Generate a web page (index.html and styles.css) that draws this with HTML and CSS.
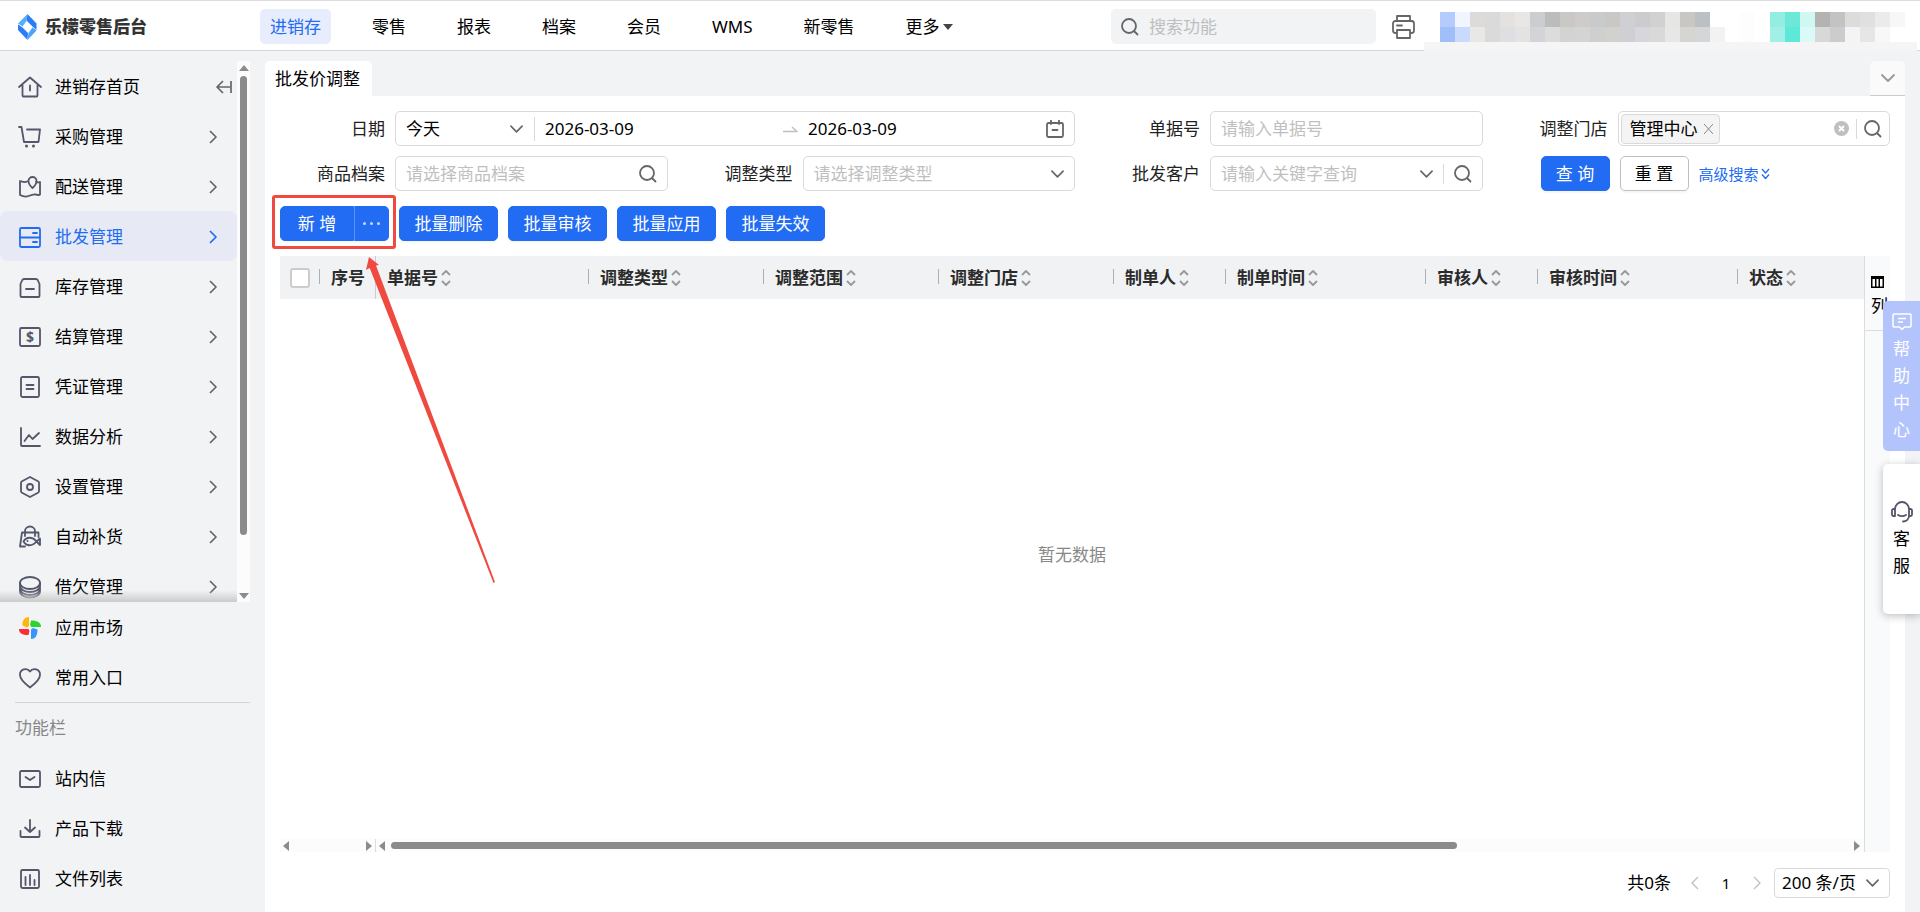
FILE: index.html
```
<!DOCTYPE html>
<html lang="zh-CN">
<head>
    <meta charset="UTF-8">
    <title>批发价调整 - 乐檬零售后台</title>
    <link rel="stylesheet" href="styles.css">
</head>
<body>
    <!-- shared icons -->
    <svg class="sprite" aria-hidden="true">
        <symbol id="i-right" viewBox="0 0 8 14"><path d="M1 1l6 6-6 6"/></symbol>
        <symbol id="i-left" viewBox="0 0 8 14"><path d="M7 1L1 7l6 6"/></symbol>
        <symbol id="i-down" viewBox="0 0 14 8"><path d="M1 1l6 6 6-6"/></symbol>
        <symbol id="i-search" viewBox="0 0 18 18"><circle cx="8" cy="8" r="7"/><path d="M13.500 13.500l3 3"/></symbol>
        <symbol id="i-sort" viewBox="0 0 10 18"><path d="M1 6l4-4 4 4M1 12l4 4 4-4"/></symbol>
    </svg>

    <header class="header">
        <div class="brand">
            <svg width="19" height="26" viewBox="0 0 19 26">
                <path d="M9.500 0L8.500 7 4.500 12.500 0 9.500z" fill="#57aefd"/>
                <path d="M9.500 0L18.500 9.500v6.500L14.500 12.500 8.500 6.500z" fill="#2b7cf7"/>
                <path d="M0 10.500l4.500 3L10 19l-.5 7L0 16z" fill="#2b7cf7"/>
                <path d="M18.500 16.500l-4-3L10.500 19l-1 7z" fill="#4ba3fc"/>
            </svg>
            <span>乐檬零售后台</span>
        </div>
        <nav class="nav">
            <a href="#" class="active">进销存</a>
            <a href="#">零售</a>
            <a href="#">报表</a>
            <a href="#">档案</a>
            <a href="#">会员</a>
            <a href="#">WMS</a>
            <a href="#">新零售</a>
            <a href="#">更多<i class="caret"></i></a>
        </nav>
        <div class="search">
            <svg class="icon" width="18" height="18"><use href="#i-search"/></svg>
            <input type="text" placeholder="搜索功能" aria-label="搜索功能">
        </div>
        <button class="print" aria-label="打印">
            <svg class="icon" width="23" height="24" viewBox="0 0 23 24">
                <path d="M5 6V1h13v5M5 18H3.500A2.500 2.500 0 0 1 1 15.500V8.500A2.500 2.500 0 0 1 3.500 6h16A2.500 2.500 0 0 1 22 8.500v7a2.500 2.500 0 0 1-2.500 2.500H18M5 15h13v8H5zM5 10.500h5"/>
            </svg>
        </button>
        <div class="user" id="user"></div>
    </header>

    <div class="layout">
        <aside class="sidebar">
            <div class="menu-wrap">
                <div class="menu">
                    <a href="#" class="item">
                        <svg class="icon" viewBox="0 0 22 22"><path d="M0 11L11 1.500 22 11M3.500 9v10.500a1 1 0 0 0 1 1h13a1 1 0 0 0 1-1V9M11 9.500v5"/></svg>
                        <span>进销存首页</span>
                        <svg class="collapse" viewBox="0 0 16 14"><path d="M7 1L1 7l6 6M1 7h13M15 1v12"/></svg>
                    </a>
                    <a href="#" class="item">
                        <svg class="icon" viewBox="0 0 22 22"><path d="M0 1h2.500L5 16h14.500l1.500-12.500H8"/><circle class="dot" cx="7.500" cy="20" r="1.500"/><circle class="dot" cx="14.500" cy="20" r="1.500"/></svg>
                        <span>采购管理</span>
                        <svg class="arrow"><use href="#i-right"/></svg>
                    </a>
                    <a href="#" class="item">
                        <svg class="icon" viewBox="0 0 22 22"><path d="M8 5.500c-3 1.500-5 0-7-.5v14c3 1.500 6 2 8.500 1s5-2 7.500-1.500 3 1 4 0V6c-1 .5-2.500.5-4-.5M13.500 1a4 4 0 0 1 4 4c0 3.500-4 7-4 7s-4-3.500-4-7a4 4 0 0 1 4-4z"/></svg>
                        <span>配送管理</span>
                        <svg class="arrow"><use href="#i-right"/></svg>
                    </a>
                    <a href="#" class="item active">
                        <svg class="icon" viewBox="0 0 22 22"><rect x="1" y="2" width="20" height="19" rx="1.500"/><path d="M1 11.500h20M14 7h4M14 16h4"/></svg>
                        <span>批发管理</span>
                        <svg class="arrow"><use href="#i-right"/></svg>
                    </a>
                    <a href="#" class="item">
                        <svg class="icon" viewBox="0 0 22 22"><path d="M5 3h12a2 2 0 0 1 1.700 1L20.500 8v12a1 1 0 0 1-1 1h-17a1 1 0 0 1-1-1V8L3.300 4A2 2 0 0 1 5 3zM7 13h8"/></svg>
                        <span>库存管理</span>
                        <svg class="arrow"><use href="#i-right"/></svg>
                    </a>
                    <a href="#" class="item">
                        <svg class="icon" viewBox="0 0 22 22"><rect x="1" y="2" width="20" height="18" rx="1.500"/><text class="sign" x="11" y="16">$</text></svg>
                        <span>结算管理</span>
                        <svg class="arrow"><use href="#i-right"/></svg>
                    </a>
                    <a href="#" class="item">
                        <svg class="icon" viewBox="0 0 22 22"><rect x="2" y="1" width="18" height="20" rx="1.500"/><path d="M7.500 9h7M7.500 13h7"/></svg>
                        <span>凭证管理</span>
                        <svg class="arrow"><use href="#i-right"/></svg>
                    </a>
                    <a href="#" class="item">
                        <svg class="icon" viewBox="0 0 22 22"><path d="M2 2v17a1 1 0 0 0 1 1h18M5.500 15l4.500-6 3.500 4L20 7"/></svg>
                        <span>数据分析</span>
                        <svg class="arrow"><use href="#i-right"/></svg>
                    </a>
                    <a href="#" class="item">
                        <svg class="icon" viewBox="0 0 22 22"><path d="M11 1l8 4.200q1 .5 1 1.500v8.600q0 1-1 1.500L11 21l-8-4.200q-1-.5-1-1.500V6.700q0-1 1-1.500z"/><circle cx="11" cy="11" r="3"/></svg>
                        <span>设置管理</span>
                        <svg class="arrow"><use href="#i-right"/></svg>
                    </a>
                    <a href="#" class="item">
                        <svg class="icon" viewBox="0 0 22 22"><path d="M6 10V5a5 4.500 0 0 1 10 0v5M19.500 11V6.500H3L1 20.500h5M4.500 15.500c3-5 9-5 13 0l3.500-3v6.500l-3.500-3.500c-4 5-10 5-13 0z"/><circle class="dot" cx="8.500" cy="15" r="1"/></svg>
                        <span>自动补货</span>
                        <svg class="arrow"><use href="#i-right"/></svg>
                    </a>
                    <a href="#" class="item">
                        <svg class="icon" viewBox="0 0 22 22"><ellipse cx="11" cy="7" rx="10" ry="6"/><path d="M1 7v8.500c0 3.300 4.500 6 10 6s10-2.700 10-6V7M1 10c0 3.300 4.500 6 10 6s10-2.700 10-6M1 13c0 3.300 4.500 6 10 6s10-2.700 10-6"/></svg>
                        <span>借欠管理</span>
                        <svg class="arrow"><use href="#i-right"/></svg>
                    </a>
                </div>
                <div class="scroll-y">
                    <i class="tri up"></i>
                    <i class="thumb"></i>
                    <i class="tri down"></i>
                </div>
            </div>
            <div class="menu-bottom">
                <a href="#" class="item">
                    <svg viewBox="0 0 22 22">
                        <path d="M10 9V0C6 0 3 3 3.500 8.500L8 10.500z" fill="#ffb60a"/>
                        <path d="M12.500 10H22c0-4-3-6.500-10-6.500L11 8z" fill="#2bd42f"/>
                        <path d="M12 12.500V22c4 0 6.500-3 6.500-9.500L14 11z" fill="#3596ff"/>
                        <path d="M9.500 12H0c0 4 3 6 9.500 6l1-4z" fill="#fb2c36"/>
                    </svg>
                    <span>应用市场</span>
                </a>
                <a href="#" class="item">
                    <svg class="icon" viewBox="0 0 22 22"><path d="M11 20.500C5 16 1 12.500 1 8a5.500 5.500 0 0 1 10-3.500A5.500 5.500 0 0 1 21 8c0 4.500-4 8-10 12.500z"/></svg>
                    <span>常用入口</span>
                </a>
                <div class="menu-title">功能栏</div>
                <a href="#" class="item">
                    <svg class="icon" viewBox="0 0 22 22"><rect x="1" y="3" width="20" height="16" rx="1.500"/><path d="M6.500 9l4.500 3 4.500-3"/></svg>
                    <span>站内信</span>
                </a>
                <a href="#" class="item">
                    <svg class="icon" viewBox="0 0 22 22"><path d="M11 2v12M6 9.500l5 4.500 5-4.500M1.500 13v5a1 1 0 0 0 1 1h17a1 1 0 0 0 1-1v-5"/></svg>
                    <span>产品下载</span>
                </a>
                <a href="#" class="item">
                    <svg class="icon" viewBox="0 0 22 22"><rect x="2" y="2" width="18" height="18" rx="1.500"/><path d="M6.500 9v8M11 7v10M15.500 12v5"/></svg>
                    <span>文件列表</span>
                </a>
            </div>
        </aside>

        <main class="content">
            <div class="tabs">
                <a href="#" class="tab">批发价调整</a>
                <button class="tab-more" aria-label="更多标签"><svg class="icon" width="14" height="8"><use href="#i-down"/></svg></button>
            </div>

            <div class="panel">
                <form class="filters">
                    <div class="field wide">
                        <label for="dateType">日期</label>
                        <div class="control">
                            <div class="date-type">
                                <select id="dateType"><option>今天</option></select>
                                <svg class="icon" width="13" height="8"><use href="#i-down"/></svg>
                            </div>
                            <input type="text" class="date" value="2026-03-09" aria-label="开始日期">
                            <svg class="to" width="15" height="8" viewBox="0 0 15 8"><path d="M0 6.500h14L9 2"/></svg>
                            <input type="text" class="date" value="2026-03-09" aria-label="结束日期">
                            <svg class="icon" width="18" height="18" viewBox="0 0 18 18"><rect x="1" y="3" width="16" height="14" rx="1.500"/><path d="M5 0v4M13 0v4M6.500 10h5"/></svg>
                        </div>
                    </div>
                    <div class="field">
                        <label for="billNo">单据号</label>
                        <div class="control"><input type="text" id="billNo" placeholder="请输入单据号"></div>
                    </div>
                    <div class="field">
                        <label for="store">调整门店</label>
                        <div class="control store">
                            <span class="tag">管理中心<svg width="9" height="10" viewBox="0 0 9 10"><path d="M0 0l9 10M9 0L0 10"/></svg></span>
                            <input type="text" id="store">
                            <svg width="15" height="15" viewBox="0 0 15 15"><circle cx="7.500" cy="7.500" r="7.500" fill="#bfbfbf"/><path d="M5 5l5 5M10 5l-5 5" stroke="#fff" stroke-width="2"/></svg>
                            <i class="split"></i>
                            <svg class="icon" width="18" height="18"><use href="#i-search"/></svg>
                        </div>
                    </div>
                    <div class="field">
                        <label for="goods">商品档案</label>
                        <div class="control">
                            <input type="text" id="goods" placeholder="请选择商品档案">
                            <svg class="icon" width="18" height="18"><use href="#i-search"/></svg>
                        </div>
                    </div>
                    <div class="field">
                        <label for="adjustType">调整类型</label>
                        <div class="control">
                            <select id="adjustType" class="empty-select"><option>请选择调整类型</option></select>
                            <svg class="icon" width="13" height="8"><use href="#i-down"/></svg>
                        </div>
                    </div>
                    <div class="field">
                        <label for="customer">批发客户</label>
                        <div class="control">
                            <input type="text" id="customer" placeholder="请输入关键字查询">
                            <svg class="icon" width="13" height="8"><use href="#i-down"/></svg>
                            <i class="split"></i>
                            <svg class="icon" width="18" height="18"><use href="#i-search"/></svg>
                        </div>
                    </div>
                    <div class="actions">
                        <button type="button" class="btn primary">查 询</button>
                        <button type="button" class="btn">重 置</button>
                        <a href="#">高级搜索<svg width="9" height="12" viewBox="0 0 9 12"><path d="M1 1l3.500 4L8 1M1 6.500l3.500 4 3.500-4"/></svg></a>
                    </div>
                </form>

                <div class="toolbar">
                    <div class="btn-group">
                        <button class="btn primary">新 增</button>
                        <button class="btn primary more" aria-label="更多"><i></i><i></i><i></i></button>
                    </div>
                    <button class="btn primary">批量删除</button>
                    <button class="btn primary">批量审核</button>
                    <button class="btn primary">批量应用</button>
                    <button class="btn primary">批量失效</button>
                    <div class="mark"></div>
                    <svg class="mark-arrow" width="134" height="330" viewBox="0 0 134 330"><path d="M5 1L2 14l3.700-2L129.500 327l1.500-1L12 9.500 15 9z"/></svg>
                </div>

                <div class="grid">
                    <div class="grid-main">
                        <table>
                            <colgroup>
                                <col class="w-check"><col class="w-index"><col class="w-bill"><col class="w-mid"><col class="w-mid"><col class="w-mid"><col class="w-name"><col class="w-time"><col class="w-name"><col class="w-time"><col>
                            </colgroup>
                            <thead>
                                <tr>
                                    <th class="check"><input type="checkbox" aria-label="全选"></th>
                                    <th class="pinned">序号</th>
                                    <th>单据号<svg class="sort"><use href="#i-sort"/></svg></th>
                                    <th>调整类型<svg class="sort"><use href="#i-sort"/></svg></th>
                                    <th>调整范围<svg class="sort"><use href="#i-sort"/></svg></th>
                                    <th>调整门店<svg class="sort"><use href="#i-sort"/></svg></th>
                                    <th>制单人<svg class="sort"><use href="#i-sort"/></svg></th>
                                    <th>制单时间<svg class="sort"><use href="#i-sort"/></svg></th>
                                    <th>审核人<svg class="sort"><use href="#i-sort"/></svg></th>
                                    <th>审核时间<svg class="sort"><use href="#i-sort"/></svg></th>
                                    <th>状态<svg class="sort"><use href="#i-sort"/></svg></th>
                                </tr>
                            </thead>
                        </table>
                        <div class="empty">暂无数据</div>
                        <div class="scroll-x">
                            <div class="track fixed"><i class="tri left"></i><i class="tri right"></i></div>
                            <div class="track"><i class="tri left"></i><i class="thumb"></i><i class="tri right"></i></div>
                        </div>
                    </div>
                    <div class="grid-side">
                        <button>
                            <svg width="13" height="12" viewBox="0 0 13 12"><path d="M0 0h13v12H0z"/><path d="M1.500 3H4v7.500H1.500zM5.500 3h2v7.500h-2zM9 3h2.500v7.500H9z" fill="#fff"/></svg>
                            列
                        </button>
                    </div>
                </div>

                <div class="pager">
                    <span class="total">共0条</span>
                    <button aria-label="上一页"><svg width="8" height="14"><use href="#i-left"/></svg></button>
                    <span class="page">1</span>
                    <button aria-label="下一页"><svg width="8" height="14"><use href="#i-right"/></svg></button>
                    <div class="size">
                        <select aria-label="每页条数"><option>200 条/页</option></select>
                        <svg class="icon" width="13" height="8"><use href="#i-down"/></svg>
                    </div>
                </div>
            </div>
        </main>
    </div>

    <div class="float">
        <a href="#" class="help">
            <svg width="20" height="18" viewBox="0 0 20 18"><path d="M2 1h16a1 1 0 0 1 1 1v11a1 1 0 0 1-1 1h-5.500L10 16.500 7.500 14H2a1 1 0 0 1-1-1V2a1 1 0 0 1 1-1zM6 5.500h8M6 9h5"/></svg>
            <span>帮助中心</span>
        </a>
        <a href="#" class="service">
            <svg class="icon" width="22" height="22" viewBox="0 0 22 22"><path d="M4 8a7 7 0 0 1 14 0M4 8v7H2.500A1.500 1.500 0 0 1 1 13.500v-4A1.500 1.500 0 0 1 2.500 8zM18 8v7h1.500a1.500 1.500 0 0 0 1.500-1.500v-4A1.500 1.500 0 0 0 19.500 8zM18 15c0 3-2.500 5.500-6 5.500M7 14c2.500 1.500 5.500 1.500 8 0"/></svg>
            <span>客服</span>
        </a>
    </div>

    <script>
        // blurred account info in the header, one colour per block
        const rows = [
            "b3ccfd f0f5ff dcdbd9 d8dadc e3e2df e9e6e5 cbcdd1 bcbcbc cac8c5 cdcccb c9cacb c9c8c6 cfd0d4 ccccce d1d1d1 e6e6e5 c9c7c4 bbc0c4 ffffff ffffff fdfdfd ffffff 94ede1 6de7d8 d0f8f3 b5b3b2 c3c3c3 dcdcdb e0e0e1 ebebeb f7f7f7",
            "a0bef8 c9dafc e9e8e6 dadada dddfe2 e3e3e3 d3d4d7 dcdcdd d1d4d2 d4d5d2 cfcfd0 d2d1cd cfcfd4 d5d7dc d9d9d9 e7e7e7 d5d5d2 d5d6d7 f2f2f2 ffffff fdfdfd ffffff a1f0e8 5ee8da dafaf7 d8d8d8 cccccc f2f4f6 e6e6e6 f8f8f8 ffffff"
        ];
        const user = document.getElementById("user");
        rows.join(" ").split(" ").forEach(color => {
            const block = document.createElement("i");
            block.style.background = "#" + color;
            user.appendChild(block);
        });
    </script>
</body>
</html>
```
FILE: styles.css
```
* {
    box-sizing: border-box;
}

body {
    margin: 0;
    height: 100vh;
    display: flex;
    flex-direction: column;
    overflow: hidden;
    background: #f1f3f5;
    color: #000;
    font: 17px/24px "Noto Sans", "Noto Sans CJK SC", sans-serif;
}

a {
    color: inherit;
    text-decoration: none;
}

input, select, button {
    font: inherit;
    color: inherit;
    margin: 0;
    padding: 0;
    border: none;
    background: none;
    outline: none;
}

button {
    cursor: pointer;
}

select {
    appearance: none;
    flex: 1;
    min-width: 0;
}

input::placeholder, .empty-select {
    color: #bfbfbf;
    opacity: 1;
}

svg {
    flex: none;
    fill: none;
    stroke-linejoin: round;
}

.sprite {
    position: absolute;
    width: 0;
    height: 0;
}

.icon {
    stroke: #666;
    stroke-width: 1.8;
    stroke-linecap: round;
}

/* header */
.header {
    flex: none;
    height: 51px;
    padding-top: 2px;
    display: flex;
    align-items: center;
    background: #fff;
    border-top: 1px solid #ddd;
    border-bottom: 1px solid #d5d6d8;
}

.brand {
    width: 260px;
    padding-left: 18px;
    display: flex;
    align-items: center;
    gap: 8px;
    color: #333;
    font-weight: 900;
}

.nav {
    display: flex;
    gap: 31px;
}

.nav a {
    padding: 0 10px;
    line-height: 35px;
    border-radius: 5px;
}

.nav .active {
    background: #e7edfc;
    color: #226bf3;
}

.caret {
    display: inline-block;
    margin-left: 3px;
    vertical-align: 3px;
    border: 5px solid transparent;
    border-top: 6px solid #444;
    border-bottom: none;
}

.search {
    width: 265px;
    height: 35px;
    margin-left: auto;
    padding: 0 10px;
    display: flex;
    align-items: center;
    gap: 10px;
    background: #f1f3f5;
    border-radius: 5px;
}

.search input {
    flex: 1;
    min-width: 0;
}

.print {
    margin: 0 9px 0 16px;
    display: flex;
}

.user {
    align-self: flex-end;
    margin: 0 3px -1px 0;
    padding: 0 12px 0 16px;
    display: grid;
    grid-template-columns: repeat(31, 15px);
    grid-auto-rows: 15px;
    background: #fff;
    border-bottom: 9px solid #f5f5f5;
}

/* left menu */
.layout {
    flex: 1;
    min-height: 0;
    display: flex;
}

.sidebar {
    flex: none;
    width: 265px;
    padding: 10px 15px 0 0;
    display: flex;
    flex-direction: column;
}

.menu-wrap {
    flex: 1;
    min-height: 0;
    display: flex;
}

.menu {
    position: relative;
    flex: 1;
    overflow: hidden;
}

.menu::after {
    content: "";
    position: absolute;
    left: 0;
    right: 0;
    bottom: 0;
    height: 12px;
    background: linear-gradient(rgba(200, 200, 200, 0), #cbcbcb);
}

.item {
    height: 50px;
    padding: 1px 20px 0 19px;
    display: flex;
    align-items: center;
    gap: 14px;
}

.item svg:first-child {
    width: 22px;
    height: 22px;
    overflow: visible;
}

.item .icon {
    stroke: #54566a;
}

.item span {
    flex: 1;
}

.item .arrow {
    width: 8px;
    height: 14px;
    stroke: #666;
    stroke-width: 1.7;
}

.item .collapse {
    width: 16px;
    height: 14px;
    margin-right: -15px;
    stroke: #666;
    stroke-width: 1.7;
}

.item.active {
    background: #e7eaf4;
    border-radius: 8px;
    color: #226bf3;
}

.item.active svg {
    stroke: #226bf3;
}

.dot {
    fill: #54566a;
    stroke: none;
}

.sign {
    fill: #54566a;
    stroke: none;
    font-size: 14px;
    font-weight: bold;
    text-anchor: middle;
}

.menu-bottom {
    flex: none;
    padding-bottom: 9px;
}

.menu-title {
    margin-left: 15px;
    border-top: 1px solid #d5d6d8;
    line-height: 50px;
    color: #888;
}

/* scrollbars */
.thumb {
    background: #8b8b8b;
    border-radius: 4px;
}

.tri {
    border: 5px solid transparent;
}

.tri.up {
    border-top: none;
    border-bottom: 6px solid #8b8b8b;
}

.tri.down {
    border-bottom: none;
    border-top: 6px solid #8b8b8b;
}

.tri.left {
    border-left: none;
    border-right: 6px solid #8b8b8b;
}

.tri.right {
    border-right: none;
    border-left: 6px solid #8b8b8b;
}

.scroll-y {
    width: 13px;
    padding: 4px 0 3px;
    display: flex;
    flex-direction: column;
    align-items: center;
    background: #fcfcfc;
}

.scroll-y .thumb {
    width: 7px;
    height: 86%;
    margin: 5px 0 auto;
}

.scroll-x {
    display: flex;
    height: 13px;
}

.track {
    flex: 1;
    padding: 0 4px 0 3px;
    display: flex;
    align-items: center;
    justify-content: space-between;
    background: #fcfcfc;
}

.track.fixed {
    flex: none;
    width: 96px;
    padding-right: 3px;
    border-right: 1px solid #ddd;
}

.track .thumb {
    width: 72%;
    height: 7px;
    margin: 0 auto 0 6px;
}

/* content */
.content {
    flex: 1;
    min-width: 0;
    padding: 10px 15px 0 0;
    display: flex;
    flex-direction: column;
}

.tabs {
    display: flex;
    justify-content: space-between;
    height: 35px;
}

.tab {
    padding: 0 12px 0 10px;
    line-height: 36px;
    background: #fff;
    border-radius: 5px 5px 0 0;
}

.tab-more {
    width: 35px;
    display: flex;
    align-items: center;
    justify-content: center;
    background: #fafafa;
    border-bottom: 1px solid #ccc;
    border-radius: 5px 5px 0 0;
}

.tab-more .icon {
    stroke: #999;
}

.panel {
    flex: 1;
    min-height: 0;
    padding: 15px 15px 14px;
    display: flex;
    flex-direction: column;
    background: #fff;
}

.filters {
    display: grid;
    grid-template-columns: repeat(4, 1fr);
    gap: 10px 20px;
}

.field {
    min-width: 0;
    display: flex;
    align-items: center;
    gap: 10px;
}

.field.wide {
    grid-column: span 2;
}

.field label {
    flex: none;
    width: 105px;
    text-align: right;
    color: #222;
}

.control {
    flex: 1;
    min-width: 0;
    height: 35px;
    padding: 0 10px;
    display: flex;
    align-items: center;
    gap: 10px;
    border: 1px solid #d9d9d9;
    border-radius: 5px;
}

.control input {
    flex: 1;
    min-width: 0;
}

.date-type {
    width: 129px;
    padding-right: 11px;
    display: flex;
    align-items: center;
    border-right: 1px solid #d9d9d9;
}

.to {
    stroke: #bfbfbf;
    stroke-width: 1.5;
}

.split {
    width: 1px;
    height: 20px;
    background: #d9d9d9;
}

.control.store {
    padding: 0 7px 0 2px;
    gap: 7px;
}

.tag {
    height: 30px;
    padding: 0 6px 0 8px;
    display: flex;
    align-items: center;
    gap: 6px;
    background: #f4f4f4;
    border: 1px solid #d9d9d9;
    border-radius: 4px;
}

.tag svg {
    stroke: #888;
}

.actions {
    padding-left: 38px;
    display: flex;
    align-items: center;
    gap: 10px;
}

.actions a {
    display: flex;
    align-items: center;
    gap: 2px;
    color: #226bf3;
    font-size: 15px;
}

.actions a svg {
    stroke: #226bf3;
    stroke-width: 1.3;
}

.btn {
    height: 35px;
    min-width: 99px;
    background: #fff;
    border: 1px solid #bfbfbf;
    border-radius: 5px;
    box-shadow: 0 2px 2px rgba(0, 0, 0, 0.04);
}

.actions .btn {
    min-width: 69px;
}

.btn.primary {
    background: #226bf3;
    border-color: #226bf3;
    color: #fff;
}

.toolbar {
    position: relative;
    margin: 15px 0;
    display: flex;
    gap: 10px;
}

.btn-group {
    display: flex;
}

.btn-group .btn {
    min-width: 0;
    width: 74px;
    border-radius: 5px 0 0 5px;
}

.btn-group .more {
    width: 35px;
    display: flex;
    align-items: center;
    justify-content: center;
    gap: 4px;
    border-left-color: #5e94f6;
    border-radius: 0 5px 5px 0;
}

.more i {
    width: 3px;
    height: 3px;
    background: #c8daff;
    border-radius: 50%;
}

/* red callout around the add button */
.mark {
    position: absolute;
    left: -8px;
    top: -11px;
    width: 124px;
    height: 54px;
    border: 3px solid #f04a40;
    border-radius: 3px;
}

.mark-arrow {
    position: absolute;
    left: 84px;
    top: 50px;
    fill: #f04a40;
    z-index: 2;
}

/* data grid */
.grid {
    flex: 1;
    min-height: 0;
    display: flex;
}

.grid-main {
    flex: 1;
    display: flex;
    flex-direction: column;
}

table {
    width: 100%;
    table-layout: fixed;
    border-collapse: collapse;
    background: #f1f2f4;
    color: #2b2b2b;
}

.w-check { width: 40px; }
.w-index { width: 56px; }
.w-bill { width: 213px; }
.w-mid { width: 175px; }
.w-name { width: 112px; }
.w-time { width: 200px; }

th {
    position: relative;
    height: 43px;
    padding: 0 0 0 11px;
    text-align: left;
    white-space: nowrap;
}

th::after {
    content: "";
    position: absolute;
    right: 0;
    top: 13px;
    width: 1px;
    height: 15px;
    background: #a9b0bd;
}

th:last-child::after {
    display: none;
}

th.pinned::after {
    top: 0;
    height: 43px;
    background: #ccc;
}

th.check {
    padding-left: 10px;
}

th input {
    appearance: none;
    display: block;
    width: 20px;
    height: 20px;
    background: #fff;
    border: 2px solid #ccc;
    border-radius: 3px;
}

.sort {
    width: 10px;
    height: 18px;
    margin-left: 3px;
    vertical-align: -3px;
    stroke: #999;
    stroke-width: 1.8;
}

.empty {
    flex: 1;
    display: flex;
    align-items: center;
    justify-content: center;
    padding-bottom: 28px;
    color: #888;
}

.grid-side {
    width: 26px;
    background: #f9fafc;
    border-left: 1px solid #ddd;
}

.grid-side button {
    width: 100%;
    height: 75px;
    padding: 20px 0 0 4px;
    display: flex;
    flex-direction: column;
    border-bottom: 1px solid #ddd;
}

.grid-side svg {
    margin: 0 0 6px 2px;
    fill: #000;
}

.pager {
    margin-top: 16px;
    height: 30px;
    display: flex;
    align-items: center;
    justify-content: flex-end;
    gap: 13px;
}

.pager button {
    display: flex;
    stroke: #bfbfbf;
    stroke-width: 1.3;
}

.total {
    margin-right: 7px;
}

.page {
    width: 28px;
    text-align: center;
    font-size: 15px;
}

.size {
    width: 116px;
    height: 30px;
    padding: 0 10px 0 7px;
    display: flex;
    align-items: center;
    border: 1px solid #d9d9d9;
    border-radius: 4px;
}

/* floating buttons on the right edge */
.float {
    position: absolute;
    right: 0;
    top: 301px;
    width: 37px;
    z-index: 3;
}

.float a {
    height: 150px;
    display: flex;
    flex-direction: column;
    align-items: center;
    border-radius: 5px 0 0 5px;
    line-height: 27px;
}

.float span {
    width: 17px;
    word-break: break-all;
}

.help {
    padding-top: 12px;
    gap: 4px;
    background: #b3c4fd;
    color: #fff;
    stroke: #fff;
    stroke-width: 1.5;
}

.help span {
    stroke: none;
}

.service {
    margin-top: 13px;
    padding-top: 37px;
    gap: 2px;
    background: #fff;
    box-shadow: 0 2px 8px rgba(0, 0, 0, 0.25);
}

.service .icon {
    stroke: #54566a;
}
```
